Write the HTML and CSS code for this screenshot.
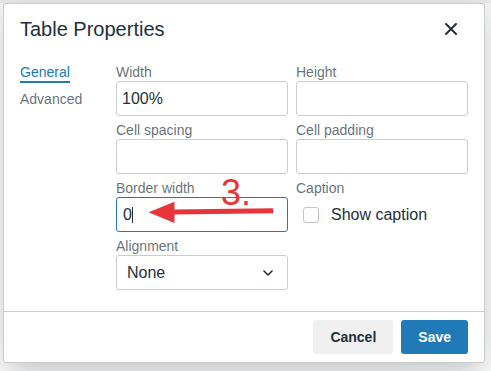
FILE: index.html
```html
<!DOCTYPE html>
<html>
<head>
<meta charset="utf-8">
<link rel="stylesheet" href="styles.css">
</head>
<body>
<div class="dialog">
  <div class="dialog-header">
    <div class="title">Table Properties</div>
    <button class="close" aria-label="Close">
      <svg width="12" height="12" viewBox="0 0 12 12"><path d="M1 1L11 11M11 1L1 11" stroke="#222f3e" stroke-width="2" stroke-linecap="round"/></svg>
    </button>
  </div>
  <div class="dialog-body">
    <nav class="tabs">
      <div class="tab active">General</div>
      <div class="tab">Advanced</div>
    </nav>
    <div class="form">
      <div class="field"><label class="label">Width</label><input class="input" value="100%"></div>
      <div class="field"><label class="label">Height</label><input class="input" value=""></div>
      <div class="field"><label class="label">Cell spacing</label><input class="input" value=""></div>
      <div class="field"><label class="label">Cell padding</label><input class="input" value=""></div>
      <div class="field">
        <label class="label">Border width</label>
        <div class="input-wrap">
          <div class="input focused">0<span class="caret"></span></div>
          <div class="note">3.</div>
          <svg class="arrow" width="132" height="30" viewBox="0 0 132 30">
            <polygon points="27,11.5 128,10.3 128.5,15.3 27,16.6" fill="#e8353a"/>
            <polygon points="3.5,14.2 29.5,3.8 29.5,25" fill="#e8353a"/>
          </svg>
        </div>
      </div>
      <div class="field">
        <label class="label">Caption</label>
        <div class="check-row"><span class="checkbox"></span><span class="check-text">Show caption</span></div>
      </div>
      <div class="field">
        <label class="label">Alignment</label>
        <div class="select">None
          <svg width="10" height="6" viewBox="0 0 10 6"><path d="M1 1L5 5L9 1" fill="none" stroke="#222f3e" stroke-width="1.6" stroke-linecap="round" stroke-linejoin="round"/></svg>
        </div>
      </div>
    </div>
  </div>
  <div class="dialog-footer">
    <button class="btn secondary">Cancel</button>
    <button class="btn primary">Save</button>
  </div>
</div>
</body>
</html>
```
FILE: styles.css
```css
html, body {
  margin: 0;
  padding: 0;
}
body {
  width: 491px;
  height: 371px;
  overflow: hidden;
  padding: 3px 0 0 3px;
  box-sizing: border-box;
  background: linear-gradient(to bottom, #ececec 0, #ececec 3px, #f7f7f7 3px);
  font-family: "Liberation Sans", Arial, sans-serif;
  color: #222f3e;
}
.dialog {
  width: 482px;
  box-sizing: border-box;
  background: #fff;
  border: 1px solid #ccc;
  border-radius: 3px;
  box-shadow: 0 16px 16px -10px rgba(34,47,62,.15), 0 0 40px 1px rgba(34,47,62,.15);
  display: flex;
  flex-direction: column;
}
.dialog-header {
  display: flex;
  align-items: center;
  justify-content: space-between;
  padding: 8px 16px 0 16px;
  height: 42px;
  box-sizing: border-box;
}
.title {
  font-size: 20px;
  line-height: 26px;
}
.close {
  width: 34px;
  height: 34px;
  border: 0;
  background: transparent;
  padding: 0;
  display: flex;
  align-items: center;
  justify-content: center;
}
.dialog-body {
  display: grid;
  grid-template-columns: 96px 352px;
  padding: 17px 16px 21px 16px;
}
.tabs {
  display: flex;
  flex-direction: column;
  align-items: flex-start;
  gap: 6px;
}
.tab {
  font-size: 14px;
  line-height: 18px;
  color: rgba(34,47,62,.7);
  border-bottom: 2px solid transparent;
  margin-bottom: 1px;
}
.tab.active {
  color: #207ab7;
  border-bottom-color: #207ab7;
}
.form {
  display: grid;
  grid-template-columns: 172px 172px;
  column-gap: 8px;
  row-gap: 5px;
}
.field {
  display: flex;
  flex-direction: column;
}
.label {
  font-size: 14px;
  line-height: 18px;
  color: rgba(34,47,62,.7);
}
.input {
  box-sizing: border-box;
  width: 172px;
  height: 35px;
  border: 1px solid #ccc;
  border-radius: 3px;
  padding: 0 5px;
  font: 16px "Liberation Sans", Arial, sans-serif;
  color: #222f3e;
  background: #fff;
  outline: none;
  margin: 0;
}
.input-wrap {
  position: relative;
}
.input.focused {
  border-color: #207ab7;
  display: flex;
  align-items: center;
  padding-left: 6px;
}
.caret {
  display: inline-block;
  width: 1px;
  height: 16px;
  background: #222f3e;
  margin-left: 0px;
}
.note {
  position: absolute;
  left: 105px;
  top: -22px;
  font-size: 36px;
  line-height: 36px;
  color: #e8353a;
}
.arrow {
  position: absolute;
  left: 29px;
  top: 1px;
}
.check-row {
  height: 35px;
  display: flex;
  align-items: center;
  gap: 12px;
  padding-left: 7px;
}
.checkbox {
  width: 16px;
  height: 16px;
  box-sizing: border-box;
  border: 1px solid #c5c5c5;
  border-radius: 3px;
  background: #fff;
}
.check-text {
  font-size: 16px;
}
.select {
  box-sizing: border-box;
  width: 172px;
  height: 35px;
  border: 1px solid #ccc;
  border-radius: 3px;
  padding: 0 14px 0 10px;
  font-size: 16px;
  display: flex;
  align-items: center;
  justify-content: space-between;
}
.dialog-footer {
  border-top: 1px solid #ccc;
  padding: 8px 16px;
  display: flex;
  justify-content: flex-end;
  gap: 8px;
}
.btn {
  height: 34px;
  padding: 0 17px;
  border: 0;
  border-radius: 3px;
  font: bold 14px "Liberation Sans", Arial, sans-serif;
}
.btn.secondary {
  background: #f0f0f0;
  color: #222f3e;
}
.btn.primary {
  background: #207ab7;
  color: #fff;
}
```
